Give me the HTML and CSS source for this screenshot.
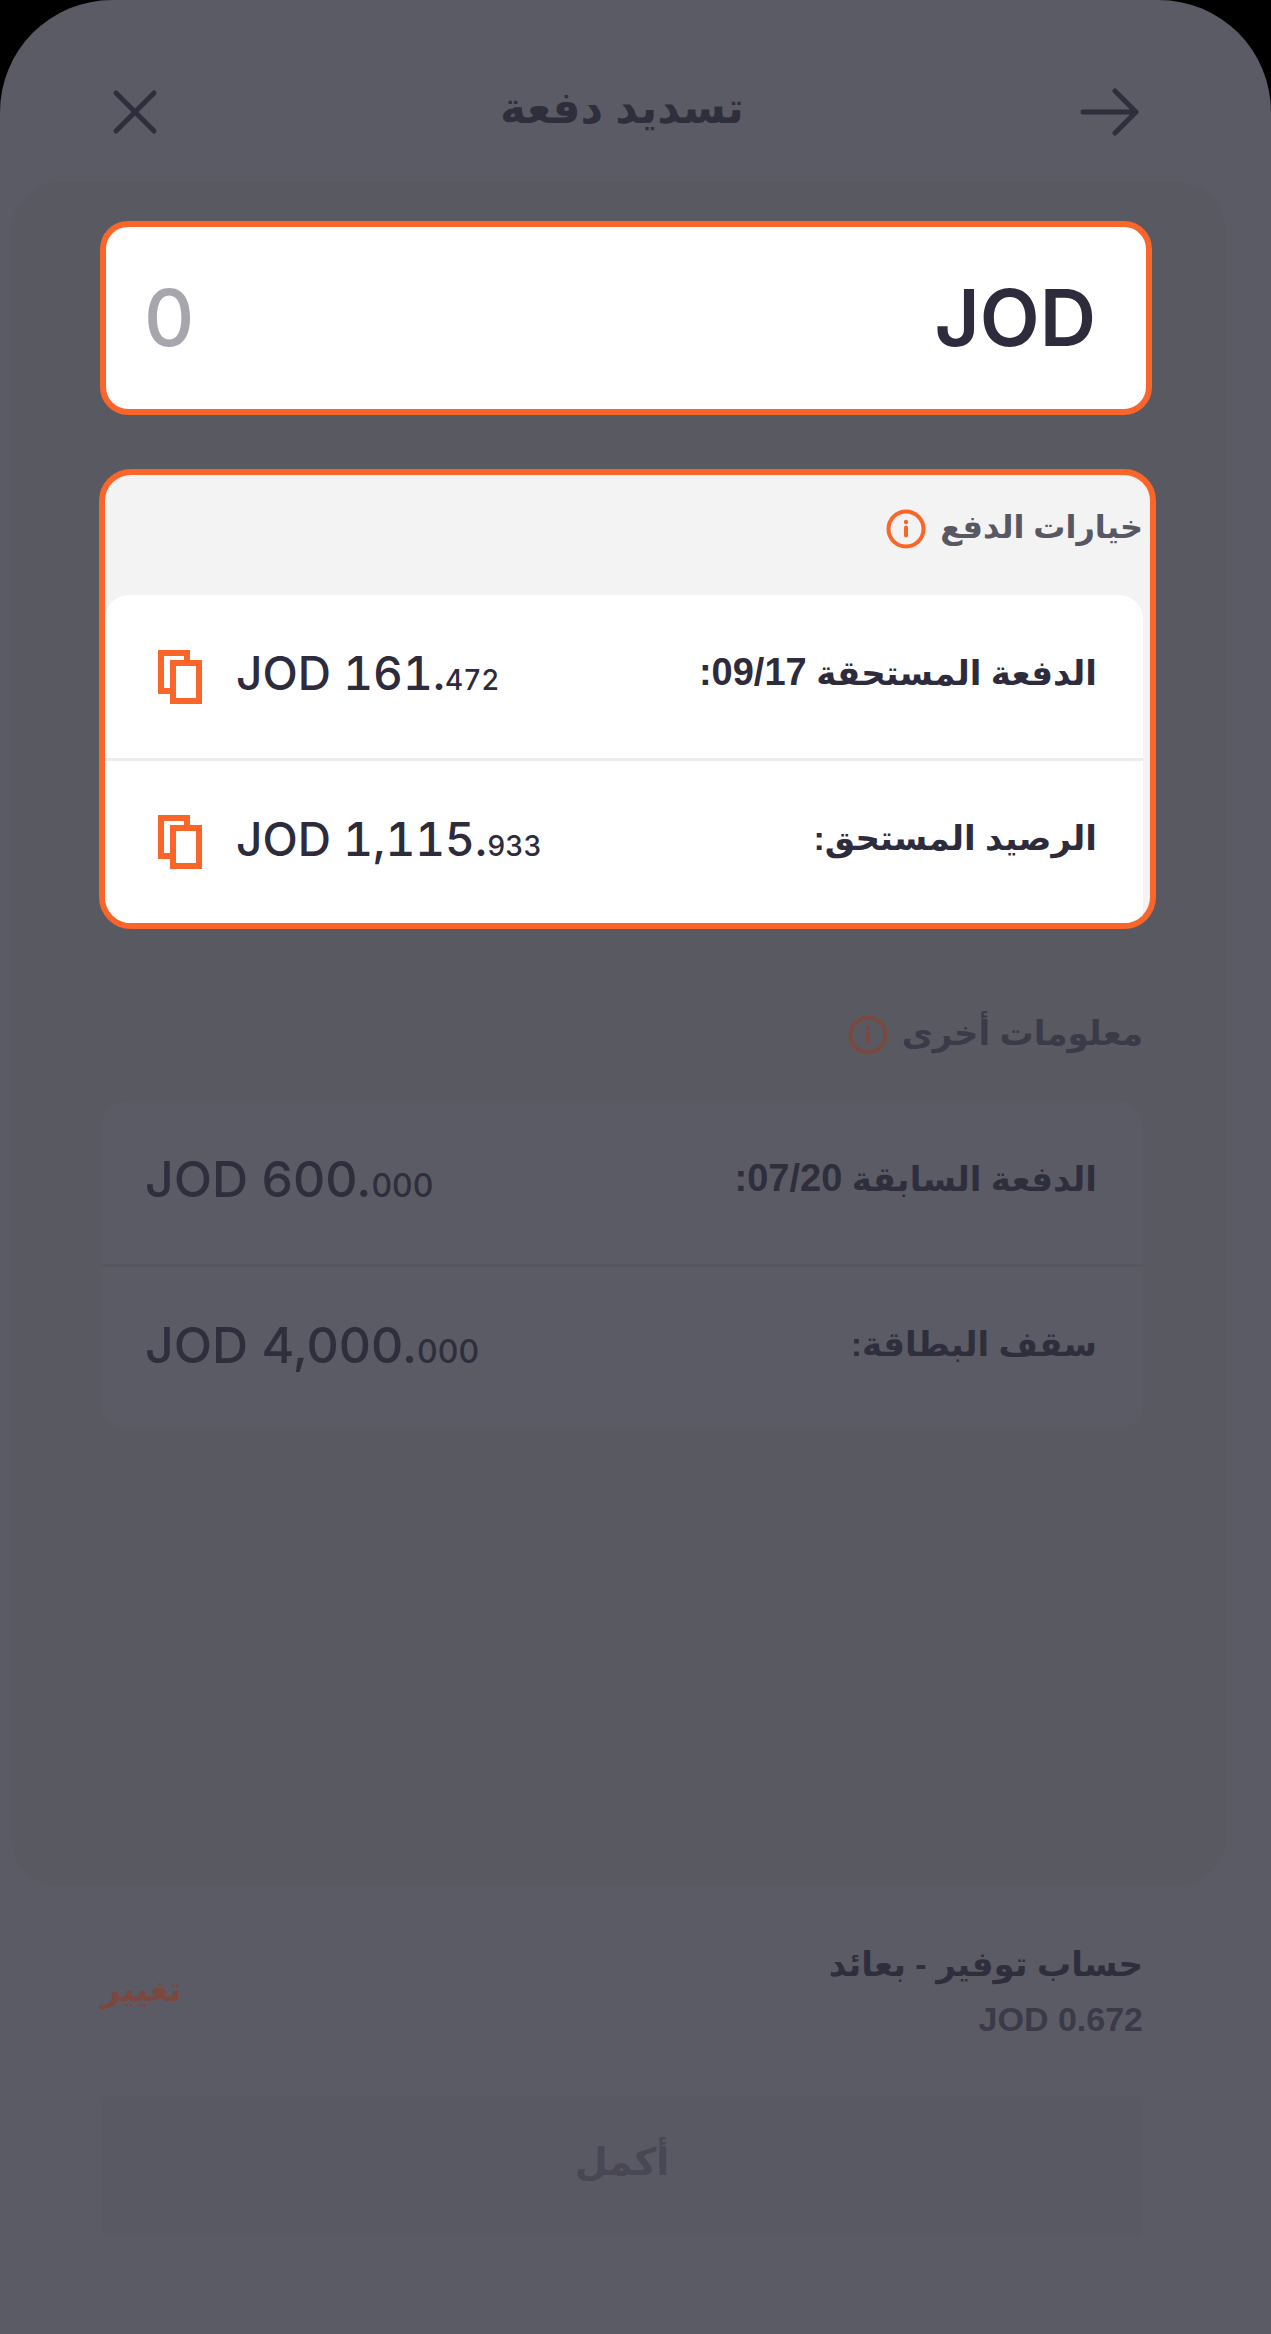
FILE: index.html
```html
<!DOCTYPE html>
<html lang="ar" dir="rtl">
<head>
<meta charset="utf-8">
<meta name="viewport" content="width=device-width, initial-scale=1">
<title>تسديد دفعة</title>
<link rel="stylesheet" href="styles.css">
</head>
<body>
<div class="screen">
  <header class="topbar">
    <button class="icon-button" type="button" aria-label="رجوع">
      <svg class="icon-arrow" viewBox="0 0 60 48" aria-hidden="true"><path d="M4 24H56M36 3L57 24L36 45"/></svg>
    </button>
    <h1 class="title">تسديد دفعة</h1>
    <button class="icon-button icon-button-close" type="button" aria-label="إغلاق">
      <svg class="icon-close" viewBox="0 0 46 46" aria-hidden="true"><path d="M4 4L42 42M42 4L4 42"/></svg>
    </button>
  </header>

  <main class="panel">
    <div class="amount-box">
      <label class="currency" for="amount">JOD</label>
      <input class="amount-input" id="amount" type="text" inputmode="decimal" placeholder="0" dir="ltr">
    </div>

    <section class="section section-active">
      <div class="section-head">
        <h2 class="section-title">خيارات الدفع</h2>
        <svg class="icon-info" viewBox="0 0 40 40" aria-hidden="true"><circle cx="20" cy="20" r="17.5"/><path d="M20 18.500V26.500"/><circle class="dot" cx="20" cy="13" r="2.200"/></svg>
      </div>
      <dl class="card">
        <div class="row">
          <dt class="label">الدفعة المستحقة <span class="date">09/17:</span></dt>
          <dd class="value" dir="ltr">
            <button class="copy" type="button" aria-label="نسخ"><svg class="icon-copy" viewBox="0 0 44 54" aria-hidden="true"><path d="M12 41H3V3H29V10"/><rect x="15" y="13" width="26" height="38"/></svg></button>
            <span class="money">JOD 161.<small class="fraction">472</small></span>
          </dd>
        </div>
        <div class="row">
          <dt class="label">الرصيد المستحق:</dt>
          <dd class="value" dir="ltr">
            <button class="copy" type="button" aria-label="نسخ"><svg class="icon-copy" viewBox="0 0 44 54" aria-hidden="true"><path d="M12 41H3V3H29V10"/><rect x="15" y="13" width="26" height="38"/></svg></button>
            <span class="money">JOD 1,115.<small class="fraction">933</small></span>
          </dd>
        </div>
      </dl>
    </section>

    <section class="section section-dim">
      <div class="section-head">
        <h2 class="section-title">معلومات أخرى</h2>
        <svg class="icon-info" viewBox="0 0 40 40" aria-hidden="true"><circle cx="20" cy="20" r="17.5"/><path d="M20 18.500V26.500"/><circle class="dot" cx="20" cy="13" r="2.200"/></svg>
      </div>
      <dl class="card">
        <div class="row">
          <dt class="label">الدفعة السابقة <span class="date">07/20:</span></dt>
          <dd class="value" dir="ltr"><span class="money">JOD 600.<small class="fraction">000</small></span></dd>
        </div>
        <div class="row">
          <dt class="label">سقف البطاقة:</dt>
          <dd class="value" dir="ltr"><span class="money">JOD 4,000.<small class="fraction">000</small></span></dd>
        </div>
      </dl>
    </section>
  </main>

  <footer class="footer">
    <div class="account">
      <div class="account-info">
        <p class="account-name">حساب توفير - بعائد</p>
        <p class="account-balance"><bdi>JOD 0.672</bdi></p>
      </div>
      <a class="change" href="#">تغيير</a>
    </div>
    <button class="submit" type="button" disabled>أكمل</button>
  </footer>
</div>
</body>
</html>
```
FILE: styles.css
```css
:root {
  --screen: #5b5b66;
  --panel: #595962;
  --ink: #2d2b3c;
  --ink-dim: #2f2e3c;
  --muted-dim: #3b3a48;
  --grey: #585764;
  --orange: #fa6529;
  --orange-dim: #7b4840;
  --arabic: "Liberation Sans", "DejaVu Sans", sans-serif;
  --latin: Inter, "DejaVu Sans", sans-serif;
}

* {
  box-sizing: border-box;
}

body {
  margin: 0;
  background: #000;
  color: var(--ink-dim);
  font-family: var(--arabic);
  font-weight: 700;
}

h1, h2, p, dl, dd {
  margin: 0;
}

button {
  padding: 0;
  border: 0;
  background: none;
  color: inherit;
  font: inherit;
}

svg {
  display: block;
  fill: none;
  stroke: currentColor;
}

.screen {
  display: flex;
  flex-direction: column;
  min-height: 100vh;
  border-radius: 112px 112px 0 0;
  background: var(--screen);
}

.topbar {
  display: flex;
  align-items: center;
  justify-content: space-between;
  height: 182px;
  padding: 42px 128px 0 101px;
}

.title {
  padding-bottom: 8px;
  font-size: 44px;
  line-height: 56px;
}

.icon-button {
  display: flex;
  align-items: center;
  width: 68px;
  height: 68px;
  padding: 0 4px;
}

.icon-button-close {
  justify-content: flex-end;
  padding: 0 11px;
}

.icon-arrow {
  width: 60px;
  height: 48px;
  stroke-width: 5;
  stroke-linecap: round;
  stroke-linejoin: round;
}

.icon-close {
  width: 46px;
  height: 46px;
  stroke-width: 5;
  stroke-linecap: round;
}

.panel {
  flex: 1;
  margin: 0 45px 0 11px;
  padding: 39px 83px 0 90px;
  border-radius: 50px;
  background: var(--panel);
}

.amount-box {
  display: flex;
  align-items: center;
  justify-content: space-between;
  height: 194px;
  margin: 0 -9px 0 -1px;
  padding: 0 50px 0 38px;
  border: 6px solid var(--orange);
  border-radius: 28px;
  background: #fff;
  color: var(--ink);
  font-family: var(--latin);
  font-size: 78px;
  font-weight: 600;
  line-height: 96px;
}

.amount-input {
  flex: 1;
  min-width: 0;
  padding: 0;
  border: 0;
  outline: 0;
  background: none;
  color: var(--ink);
  font: inherit;
  font-weight: 500;
}

.amount-input::placeholder {
  color: #a7a6ad;
  opacity: 1;
}

.section-head {
  display: flex;
  align-items: center;
  gap: 14px;
  height: 120px;
  padding-bottom: 12px;
}

.section-title {
  padding-bottom: 4px;
  font-size: 32px;
  line-height: 48px;
}

.icon-info {
  width: 40px;
  height: 40px;
  stroke-width: 4;
  stroke-linecap: round;
}

.icon-info .dot {
  fill: currentColor;
  stroke: none;
}

.row {
  display: flex;
  align-items: center;
  justify-content: space-between;
  height: 163px;
  padding: 0 46px 0 44px;
}

.row + .row {
  height: 165px;
  border-top: 3px solid #ececec;
}

.label {
  padding-bottom: 8px;
  font-size: 34px;
  line-height: 48px;
}

.date {
  font-size: 38px;
}

.value {
  display: flex;
  align-items: center;
  gap: 34px;
}

.money {
  font-family: var(--latin);
  font-size: 50px;
  font-weight: 500;
  line-height: 64px;
}

.fraction {
  font-size: 32px;
}

.section-active {
  margin: 54px -13px 0 -2px;
  border: 6px solid var(--orange);
  border-radius: 32px;
  background: #f3f3f3;
  color: var(--ink);
  overflow: hidden;
}

.section-active .section-head {
  padding-right: 7px;
  color: var(--orange);
}

.section-active .section-title {
  color: var(--grey);
}

.section-active .card {
  margin-right: 7px;
  border-radius: 24px 24px 0 0;
  background: #fff;
}

.section-active .row {
  padding-left: 53px;
}

.section-active .money {
  font-size: 46px;
  font-variant-numeric: tabular-nums;
}

.section-active .fraction {
  font-size: 28px;
}

.copy {
  color: var(--orange);
}

.icon-copy {
  width: 44px;
  height: 54px;
  stroke-width: 6;
}

.section-dim {
  margin-top: 52px;
}

.section-dim .section-head {
  color: var(--orange-dim);
}

.section-dim .section-title {
  color: var(--muted-dim);
  font-size: 34px;
}

.section-dim .card {
  border-radius: 24px;
  background: var(--screen);
}

.section-dim .row + .row {
  border-color: #56565f;
}

.footer {
  padding: 48px 128px 98px 101px;
}

.account {
  display: flex;
  align-items: center;
  justify-content: space-between;
  margin-bottom: 52px;
}

.account-name {
  font-size: 34px;
  line-height: 60px;
}

.account-balance {
  color: var(--muted-dim);
  font-size: 34px;
  line-height: 50px;
}

.change {
  color: var(--orange-dim);
  font-size: 34px;
  line-height: 48px;
  text-decoration: none;
}

.submit {
  width: 100%;
  height: 140px;
  padding-bottom: 8px;
  border-radius: 8px;
  background: #595963;
  color: #484753;
  font-size: 38px;
}
```
